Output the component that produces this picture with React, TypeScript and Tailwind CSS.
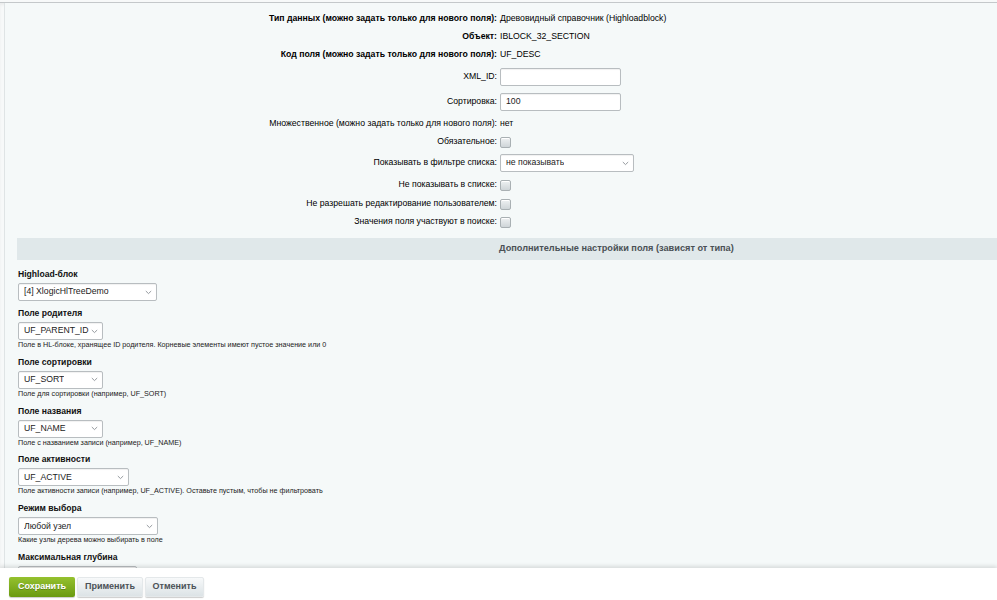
import React from "react";

const font = "font-['Liberation_Sans',Arial,sans-serif]";

function Chevron() {
  return (
    <svg width="7" height="5" viewBox="0 0 7 5" className="shrink-0">
      <path d="M0.8 1 L3.5 3.6 L6.2 1" fill="none" stroke="#8a9094" strokeWidth="0.9" />
    </svg>
  );
}

function Select({ value, w }: { value: string; w: string }) {
  return (
    <div
      className={`${w} h-[18px] flex items-center justify-between bg-white border border-[#b8bdc0] rounded-[2px] pl-[5px] pr-[4px] text-[8.7px] text-[#222] shadow-[inset_0_1px_1px_rgba(0,0,0,0.06)]`}
    >
      <span className="whitespace-nowrap overflow-hidden">{value}</span>
      <Chevron />
    </div>
  );
}

function Checkbox() {
  return (
    <div className="w-[11px] h-[11px] rounded-[2px] border border-[#a9b0b3] bg-gradient-to-b from-[#eef1f2] to-[#cfd5d8] shadow-[inset_0_1px_0_#fff]" />
  );
}

function TextInput({ value }: { value?: string }) {
  return (
    <div className="w-[121px] h-[18px] flex items-center bg-white border border-[#b8bdc0] rounded-[2px] pl-[5px] text-[8.7px] text-[#222] shadow-[inset_0_1px_1px_rgba(0,0,0,0.06)]">
      {value}
    </div>
  );
}

type Row = { label: string; bold?: boolean; h: string; value: React.ReactNode };

const rows: Row[] = [
  { label: "Тип данных (можно задать только для нового поля):", bold: true, h: "h-[18px]", value: "Древовидный справочник (Highloadblock)" },
  { label: "Объект:", bold: true, h: "h-[18px]", value: "IBLOCK_32_SECTION" },
  { label: "Код поля (можно задать только для нового поля):", bold: true, h: "h-[18px]", value: "UF_DESC" },
  { label: "XML_ID:", h: "h-[25px]", value: <TextInput /> },
  { label: "Сортировка:", h: "h-[26px]", value: <TextInput value="100" /> },
  { label: "Множественное (можно задать только для нового поля):", h: "h-[18px]", value: "нет" },
  { label: "Обязательное:", h: "h-[18px]", value: <Checkbox /> },
  { label: "Показывать в фильтре списка:", h: "h-[24px]", value: <Select value="не показывать" w="w-[134px]" /> },
  { label: "Не показывать в списке:", h: "h-[20px]", value: <Checkbox /> },
  { label: "Не разрешать редактирование пользователем:", h: "h-[18px]", value: <Checkbox /> },
  { label: "Значения поля участвуют в поиске:", h: "h-[18px]", value: <Checkbox /> },
];

type Setting = { label: string; value: string; w: string; hint?: string };

const settings: Setting[] = [
  { label: "Highload-блок", value: "[4] XlogicHlTreeDemo", w: "w-[139px]" },
  {
    label: "Поле родителя",
    value: "UF_PARENT_ID",
    w: "w-[85px]",
    hint: "Поле в HL-блоке, хранящее ID родителя. Корневые элементы имеют пустое значение или 0",
  },
  { label: "Поле сортировки", value: "UF_SORT", w: "w-[85px]", hint: "Поле для сортировки (например, UF_SORT)" },
  { label: "Поле названия", value: "UF_NAME", w: "w-[85px]", hint: "Поле с названием записи (например, UF_NAME)" },
  {
    label: "Поле активности",
    value: "UF_ACTIVE",
    w: "w-[111px]",
    hint: "Поле активности записи (например, UF_ACTIVE). Оставьте пустым, чтобы не фильтровать",
  },
  { label: "Режим выбора", value: "Любой узел", w: "w-[140px]", hint: "Какие узлы дерева можно выбирать в поле" },
  { label: "Максимальная глубина", value: "", w: "w-[119px]" },
];

export default function App() {
  return (
    <div className={`${font} w-[997px] h-[600px] flex flex-col bg-[#f7f9f9] overflow-hidden text-black`}>
      {/* edit form area */}
      <div className="flex-1 min-h-0 flex flex-col mt-[2px] border-t border-[#c4c8ca] shadow-[inset_0_2px_3px_rgba(0,0,0,0.05)] overflow-hidden">
        <div className="flex-1 min-h-0 ml-[4px] border-l border-[#dfe4e5] bg-[#f5f9f9] overflow-hidden">
          {/* field properties */}
          <div className="pt-[7px]">
            {rows.map((r) => (
              <div key={r.label} className={`flex items-center ${r.h}`}>
                <div
                  className={`w-[492px] text-right text-[8.7px] whitespace-nowrap ${r.bold ? "font-bold" : ""}`}
                >
                  {r.label}
                </div>
                <div className="pl-[3px] text-[8.7px] whitespace-nowrap flex items-center">{r.value}</div>
              </div>
            ))}
          </div>

          {/* type-specific settings */}
          <div className="mt-[7px] ml-[12px] h-[22px] bg-[#e0e8ea] flex items-center">
            <span className="ml-[482px] text-[9.2px] font-bold text-[#4a5055]">
              Дополнительные настройки поля (зависят от типа)
            </span>
          </div>

          <div className="pl-[13px] pt-[2px]">
            {settings.map((s) => (
              <div key={s.label} className="mt-[6px]">
                <div className="text-[8.6px] font-bold leading-[12px] text-[#111]">{s.label}</div>
                <div className="mt-[3px]">
                  <Select value={s.value} w={s.w} />
                </div>
                {s.hint && <div className="text-[7.2px] leading-[9.8px] text-[#222] whitespace-nowrap">{s.hint}</div>}
              </div>
            ))}
          </div>
        </div>
      </div>

      {/* action buttons */}
      <div className="h-[32px] shrink-0 bg-white shadow-[0_-2px_4px_rgba(0,0,0,0.12)] flex items-center gap-[2px] pl-[9px] pt-[5px] relative">
        <button className="h-[20px] w-[66px] rounded-[2px] bg-gradient-to-b from-[#95c12e] to-[#6a9a10] text-white text-[9px] font-bold [text-shadow:0_1px_0_rgba(0,0,0,0.25)] shadow-[0_1px_1px_rgba(0,0,0,0.2)]">
          Сохранить
        </button>
        <button className="h-[20px] w-[66px] rounded-[2px] bg-gradient-to-b from-[#f7f9fa] to-[#dce3e6] text-[#4c5258] text-[9px] font-bold shadow-[0_1px_1px_rgba(0,0,0,0.2)] border border-[#e4e8ea]">
          Применить
        </button>
        <button className="h-[20px] w-[59px] rounded-[2px] bg-gradient-to-b from-[#f7f9fa] to-[#dce3e6] text-[#4c5258] text-[9px] font-bold shadow-[0_1px_1px_rgba(0,0,0,0.2)] border border-[#e4e8ea]">
          Отменить
        </button>
      </div>
    </div>
  );
}
